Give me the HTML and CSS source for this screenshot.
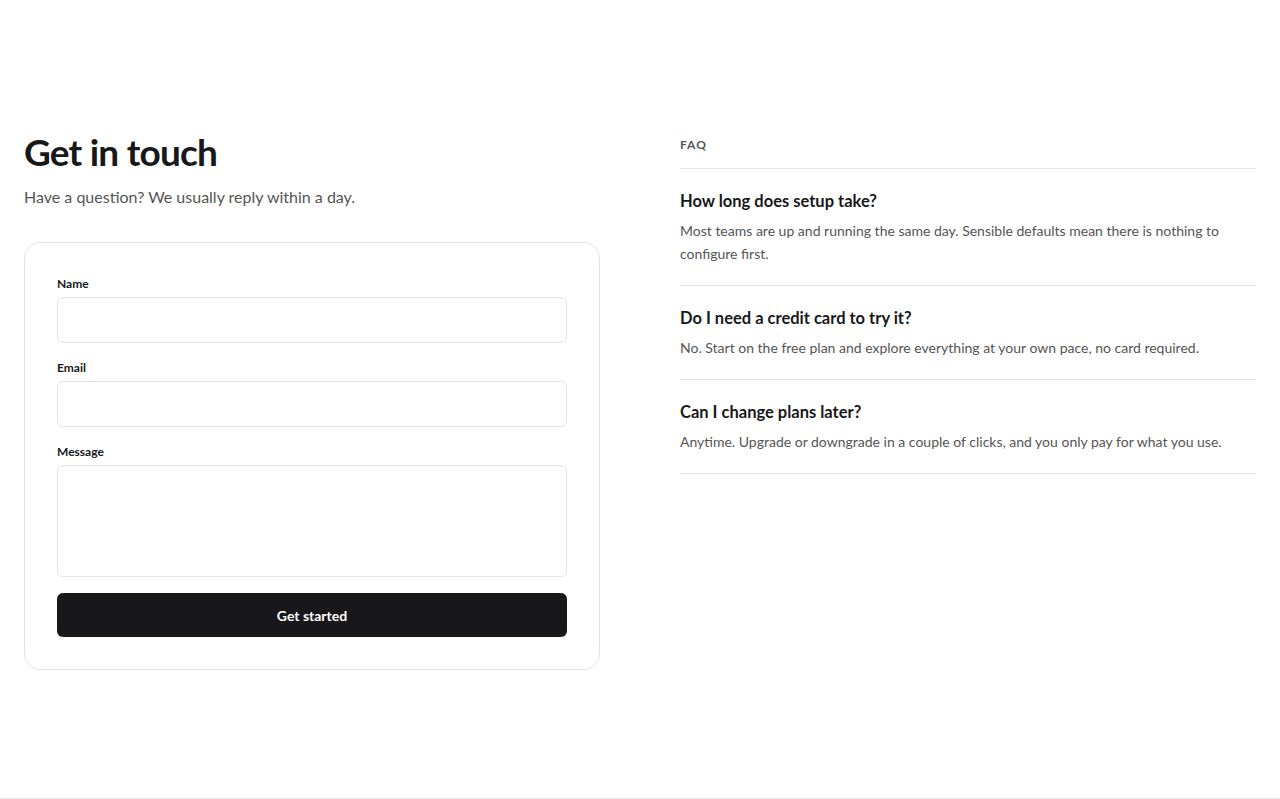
FILE: index.html
```html
<!DOCTYPE html>
<html lang="en">
<head>
  <meta charset="UTF-8">
  <title>Contact</title>
  <link rel="stylesheet" href="styles.css">
</head>
<body>
  <section class="contact">
    <div class="contact-grid">
      <div class="contact-form">
        <h1>Get in touch</h1>
        <p class="lead">Have a question? We usually reply within a day.</p>
        <form class="card">
          <div class="field">
            <label for="name">Name</label>
            <input type="text" id="name">
          </div>
          <div class="field">
            <label for="email">Email</label>
            <input type="email" id="email">
          </div>
          <div class="field">
            <label for="message">Message</label>
            <textarea id="message"></textarea>
          </div>
          <button type="button">Get started</button>
        </form>
      </div>
      <div class="faq">
        <h2 class="faq-label">FAQ</h2>
        <div class="faq-item">
          <h3>How long does setup take?</h3>
          <p>Most teams are up and running the same day. Sensible defaults mean there is nothing to configure first.</p>
        </div>
        <div class="faq-item">
          <h3>Do I need a credit card to try it?</h3>
          <p>No. Start on the free plan and explore everything at your own pace, no card required.</p>
        </div>
        <div class="faq-item">
          <h3>Can I change plans later?</h3>
          <p>Anytime. Upgrade or downgrade in a couple of clicks, and you only pay for what you use.</p>
        </div>
      </div>
    </div>
  </section>
</body>
</html>
```

FILE: styles.css
```css
body { margin: 0; font-family: 'Lato', 'Noto Sans', sans-serif; color: #18181b; background: #fff; }
.contact { padding: 128px 24px; border-bottom: 1px solid #e4e4e7; }
.contact-grid { display: grid; grid-template-columns: 1fr 1fr; gap: 80px; }

h1 { font-size: 37px; line-height: 48px; font-weight: 700; margin: 0 0 9px; letter-spacing: -0.8px; }
.lead { font-size: 16px; line-height: 24px; color: #555; margin: 0 0 33px; }

.card { border: 1px solid #e4e4e7; border-radius: 16px; padding: 32px; display: flex; flex-direction: column; gap: 16px; }
.field { display: flex; flex-direction: column; gap: 6px; }
label { font-size: 12px; line-height: 16px; font-weight: 700; margin-top: 1px; margin-bottom: -1px; }
input, textarea { font: inherit; border: 1px solid #e4e4e7; border-radius: 6px; box-sizing: border-box; }
input { height: 46px; padding: 0 12px; }
textarea { height: 112px; padding: 10px 12px; resize: none; }
button { height: 44px; border: none; border-radius: 6px; background: #18181b; color: #fff; font: inherit; font-size: 14px; font-weight: 700; cursor: pointer; }

.faq-label { font-size: 12px; line-height: 16px; font-weight: 700; letter-spacing: 1px; color: #555; margin: 8px 0 0; padding-top: 1px; padding-bottom: 15px; border-bottom: 1px solid #e4e4e7; }
.faq-item { padding: 20px 0; border-bottom: 1px solid #e4e4e7; }
.faq-item h3 { font-size: 16.5px; line-height: 24px; font-weight: 700; margin: 0 0 6px; }
.faq-item p { font-size: 14px; line-height: 23px; color: #555; margin: 0; }
```
